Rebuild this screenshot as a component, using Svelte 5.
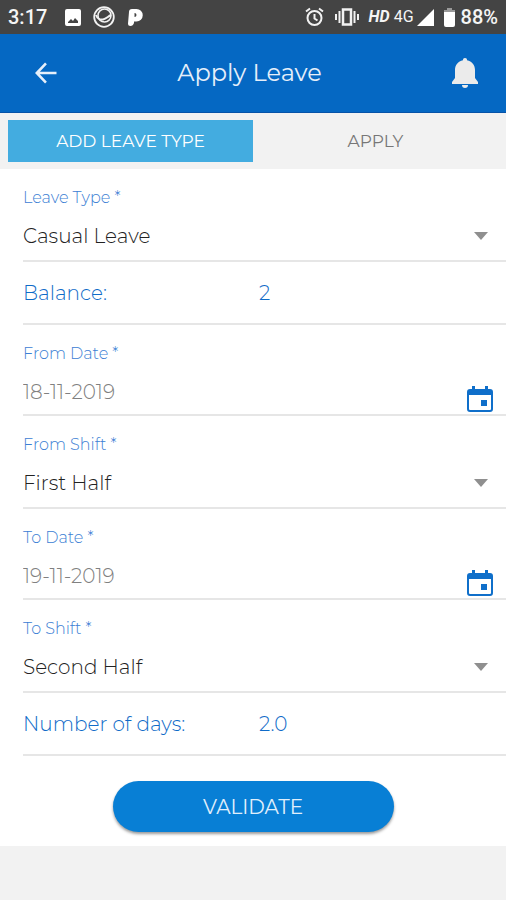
<script>
  let leaveType = $state('Casual Leave');
  let fromDate = $state('18-11-2019');
  let fromShift = $state('First Half');
  let toDate = $state('19-11-2019');
  let toShift = $state('Second Half');

  const leaveTypes = ['Casual Leave'];
  const shifts = ['First Half', 'Second Half'];
</script>

{#snippet selectField(id, label, options, value, update)}
  <div class="field select-field">
    <label for={id}>{label} *</label>
    <div class="control">
      <select {id} {value} onchange={(e) => update(e.currentTarget.value)}>
        {#each options as option}
          <option value={option}>{option}</option>
        {/each}
      </select>
      <svg class="caret" width="14" height="8" viewBox="0 0 14 8" aria-hidden="true"><path d="M0 0h14L7 8z" fill="#8f8f8f" /></svg>
    </div>
  </div>
{/snippet}

{#snippet dateField(id, label, value, update)}
  <div class="field date-field">
    <label for={id}>{label} *</label>
    <div class="control">
      <input {id} type="text" {value} oninput={(e) => update(e.currentTarget.value)} />
      <button class="calendar" type="button" aria-label="Choose {label}">
        <svg width="26" height="26" viewBox="0 0 26 26" aria-hidden="true">
          <path d="M5 0h3v3h10V0h3v3h2a3 3 0 0 1 3 3v17a3 3 0 0 1-3 3H3a3 3 0 0 1-3-3V6a3 3 0 0 1 3-3h2zM2 9v14q0 1 1 1h20q1 0 1-1V9z" fill="#0f6fca" fill-rule="evenodd" />
          <path d="M14 14h6v6h-6z" fill="#0f6fca" />
        </svg>
      </button>
    </div>
  </div>
{/snippet}

<div class="app">
  <div class="status">
    <span class="clock">3:17</span>
    <svg class="picture" width="16" height="17" viewBox="0 0 16 17" aria-hidden="true">
      <path d="M2 0h12a2 2 0 0 1 2 2v13a2 2 0 0 1-2 2H2a2 2 0 0 1-2-2V2a2 2 0 0 1 2-2zM3 14h10v-2l-3-3-2 3-2-2-3 3z" fill="#fff" fill-rule="evenodd" />
    </svg>
    <svg class="ring" width="22" height="22" viewBox="0 0 22 22" fill="none" stroke="#f2f2f2" aria-hidden="true">
      <circle cx="11" cy="11" r="9.8" stroke-width="1.800" />
      <circle cx="11.500" cy="9.500" r="6.500" stroke-width="1.500" />
      <path d="M3 9c1 3 4 5 7 4.500s5-3 8-4.500" stroke-width="2" />
    </svg>
    <svg class="pay" width="15" height="18" viewBox="0 0 15 18" aria-hidden="true">
      <path d="M1 4q0-3 3-3h4.500a6 6 0 0 1 0 12.500H6V15q-1 3-3.500 3Q0 18 0 15.500zM6.500 5v4a2 2 0 1 0 0-4z" fill="#fff" fill-rule="evenodd" />
    </svg>
    <div class="system">
      <svg width="19" height="20" viewBox="0 0 19 20" fill="none" stroke="#f2f2f2" stroke-width="2" aria-hidden="true">
        <circle cx="9.500" cy="11" r="7" />
        <path d="M1 4.500l4-3M18 4.500l-4-3M9.500 7v4.500l3 2" />
      </svg>
      <svg class="vibrate" width="24" height="18" viewBox="0 0 24 18" fill="none" stroke="#f2f2f2" stroke-width="2" aria-hidden="true">
        <path d="M8 1.500h8v15H8z" stroke-width="2.500" />
        <path d="M4.500 3v12M19.500 3v12M1 6v6M23 6v6" />
      </svg>
      <span class="hd">HD</span>
      <span class="network">4G</span>
      <svg class="signal" width="17" height="17" viewBox="0 0 17 17" aria-hidden="true"><path d="M17 0v17H0z" fill="#fff" /></svg>
      <svg class="battery" width="11" height="19" viewBox="0 0 11 19" aria-hidden="true">
        <path d="M3 0h5v2h3v3H0V2h3z" fill="#999" />
        <path d="M0 4h11v13q0 2-2 2H2q-2 0-2-2z" fill="#fff" />
      </svg>
      <span class="percent">88%</span>
    </div>
  </div>

  <header>
    <button type="button" aria-label="Back">
      <svg width="23" height="22" viewBox="0 0 24 24" fill="none" stroke="#e6effa" stroke-width="2.800" aria-hidden="true"><path d="M12.500 1.500L2.500 12l10 10.500M2.500 12H24" /></svg>
    </button>
    <h1>Apply Leave</h1>
    <button type="button" aria-label="Notifications">
      <svg width="26" height="30" viewBox="0 0 26 30" aria-hidden="true">
        <path d="M13 0a2 2 0 0 1 2 2.300C20 3.500 23 7 23 12v8l3 4v2H0v-2l3-4v-8C3 7 6 3.500 11 2.300A2 2 0 0 1 13 0zM10 27h6a3 3 0 0 1-6 0z" fill="#ebebeb" />
      </svg>
    </button>
  </header>

  <nav>
    <button type="button" class="active">ADD LEAVE TYPE</button>
    <button type="button">APPLY</button>
  </nav>

  <form onsubmit={(e) => e.preventDefault()}>
    {@render selectField('leave-type', 'Leave Type', leaveTypes, leaveType, (v) => (leaveType = v))}
    <div class="field summary"><span>Balance:</span><output>2</output></div>
    {@render dateField('from-date', 'From Date', fromDate, (v) => (fromDate = v))}
    {@render selectField('from-shift', 'From Shift', shifts, fromShift, (v) => (fromShift = v))}
    {@render dateField('to-date', 'To Date', toDate, (v) => (toDate = v))}
    {@render selectField('to-shift', 'To Shift', shifts, toShift, (v) => (toShift = v))}
    <div class="field summary"><span>Number of days:</span><output>2.0</output></div>
    <button class="validate" type="submit">VALIDATE</button>
  </form>
</div>

<style>
  :global(body) {
    margin: 0;
    background: #f2f2f2;
  }
  .app,
  button,
  input,
  select {
    font-family: Montserrat, Inter, sans-serif;
  }
  button {
    padding: 0;
    border: 0;
    background: none;
    cursor: pointer;
  }
  svg {
    display: block;
    flex: none;
  }
  .status {
    display: flex;
    align-items: center;
    height: 34px;
    padding: 0 8px;
    background: #444;
    color: #f5f5f5;
    font: 500 20px/36px Roboto, sans-serif;
  }
  .picture {
    margin-left: 18px;
  }
  .ring {
    margin-left: 12px;
  }
  .pay {
    margin-left: 13px;
  }
  .system {
    display: flex;
    align-items: center;
    margin-left: auto;
  }
  .vibrate {
    margin: 0 10px 0 11px;
  }
  .hd {
    font-size: 16px;
    font-style: italic;
    font-weight: 700;
  }
  .network {
    margin: 0 3px 0 4px;
    font-size: 16px;
    font-weight: 400;
  }
  .battery {
    margin: 0 6px 0 10px;
  }
  header {
    display: flex;
    align-items: center;
    height: 78px;
    padding: 0 28px 0 34px;
    background: #0568c3;
    border-bottom: 1px solid #0753a8;
  }
  h1 {
    flex: 1;
    margin: 0;
    padding-right: 10px;
    color: #e6effa;
    font-size: 24px;
    font-weight: 400;
    line-height: 32px;
    text-align: center;
  }
  nav {
    display: flex;
    padding: 7px 8px;
    background: #f2f2f2;
  }
  nav button {
    flex: 1;
    height: 42px;
    color: #777;
    font-size: 17px;
  }
  nav .active {
    background: #43ace0;
    color: #fff;
  }
  form {
    padding-bottom: 14px;
    background: #fff;
  }
  .field {
    box-sizing: border-box;
    margin-left: 23px;
    border-bottom: 2px solid #e6e6e6;
  }
  .select-field {
    height: 93px;
    padding-top: 20px;
  }
  .date-field {
    height: 91px;
    padding-top: 20px;
  }
  label {
    display: block;
    color: #3c80d4;
    font-size: 16px;
    font-weight: 300;
    line-height: 18px;
  }
  .control {
    display: flex;
    align-items: center;
    position: relative;
    margin-top: 14px;
  }
  select,
  input {
    flex: 1;
    min-width: 0;
    height: 30px;
    padding: 0;
    border: 0;
    outline: 0;
    background: none;
    color: #222;
    font-size: 20px;
    font-weight: 300;
    appearance: none;
  }
  input {
    color: #808080;
  }
  .caret {
    position: absolute;
    right: 18px;
    pointer-events: none;
  }
  .calendar {
    position: absolute;
    top: 9px;
    right: 13px;
  }
  .summary {
    display: grid;
    grid-template-columns: 236px 1fr;
    align-items: center;
    height: 63px;
    color: #0f6bc8;
    font-size: 20px;
    font-weight: 300;
  }
  .validate {
    display: block;
    width: 281px;
    max-width: 90%;
    height: 51px;
    margin: 25px auto 0;
    border-radius: 26px;
    background: #087fd5;
    box-shadow: 0 2px 3px #0006;
    color: #e0effc;
    font-size: 20px;
  }
</style>
